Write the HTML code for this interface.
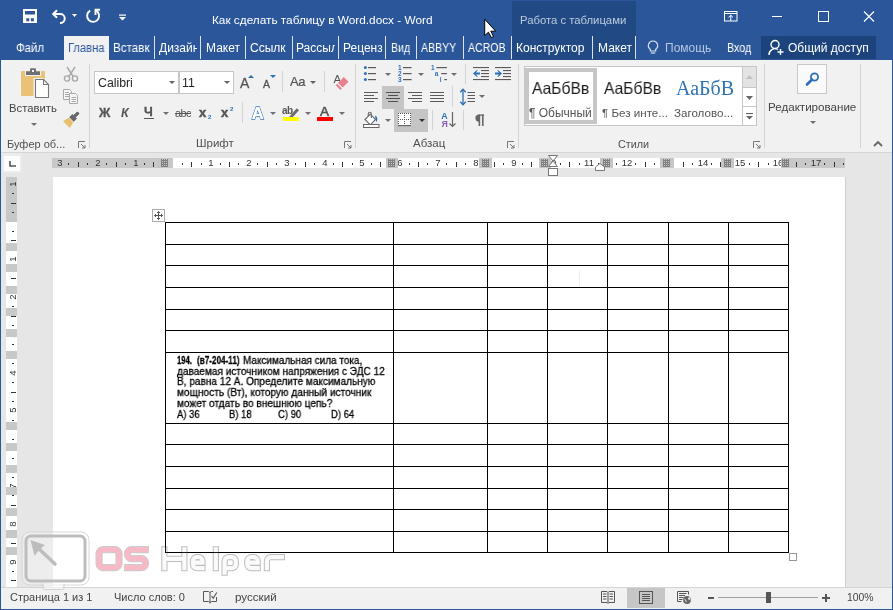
<!DOCTYPE html>
<html><head><meta charset="utf-8">
<style>
*{margin:0;padding:0;box-sizing:border-box}
html,body{width:893px;height:610px;overflow:hidden;background:#e6e6e6;font-family:"Liberation Sans",sans-serif}
.a{position:absolute}
.t{white-space:nowrap;will-change:transform}
svg{overflow:visible}
</style></head><body>
<div class="a" style="left:0px;top:0px;width:893px;height:60px;background:#2b579a;"></div>
<div class="a" style="left:512px;top:1px;width:124px;height:59px;background:#214a85;"></div>
<svg class="a" style="left:23px;top:9px;" width="14" height="14" viewBox="0 0 14 14"><path d="M0 0H14V14H0Z M2 2V5.6H12V2Z M3.3 9.3V12.3H6.3V9.3Z M7.9 9.3V12.3H10.9V9.3Z" fill="#fff" fill-rule="evenodd"/></svg>
<svg class="a" style="left:51px;top:8px;" width="16" height="15" viewBox="0 0 16 15"><path d="M2.5 6H9A4.5 4.5 0 0 1 9.5 15H9" fill="none" stroke="#fff" stroke-width="2"/><path d="M6 2.2L2.2 6L6 9.8" fill="none" stroke="#fff" stroke-width="2"/></svg>
<svg class="a" style="left:72.0px;top:14px;" width="5" height="3" viewBox="0 0 5 3"><path d="M0 0H5L2.5 3Z" fill="#fff"/></svg>
<svg class="a" style="left:86px;top:8px;" width="15" height="15" viewBox="0 0 15 15"><path d="M9.6 2.4A6 6 0 1 1 4.2 2.6" fill="none" stroke="#fff" stroke-width="1.9"/><path d="M9.5 7V1.8H14" fill="none" stroke="#fff" stroke-width="1.9"/></svg>
<svg class="a" style="left:119px;top:14px;" width="7" height="7" viewBox="0 0 7 7"><rect x="0" y="0.5" width="7" height="1.2" fill="#fff"/><path d="M0 3H7L3.5 6.5Z" fill="#fff"/></svg>
<div class="a t" style="left:212px;top:14.81px;font-size:11.8px;line-height:11.8px;color:#fff;">Как сделать таблицу в Word.docx - Word</div>
<div class="a t" style="left:520.3px;top:14.63px;font-size:11.3px;line-height:11.3px;color:#bccade;">Работа с таблицами</div>
<svg class="a" style="left:484px;top:18px;" width="14" height="21" viewBox="0 0 14 21"><path d="M0.7 1.2V17.6L4.4 14.2L7.4 19.6L9.6 18.5L6.8 13.2H11.7Z" fill="#fff" stroke="#000" stroke-width="1" stroke-linejoin="miter"/></svg>
<svg class="a" style="left:723px;top:11px;" width="15" height="11" viewBox="0 0 15 11"><rect x="1.5" y="0.5" width="12.5" height="9.5" fill="none" stroke="#fff"/><path d="M1.5 2.5H14" stroke="#fff"/><path d="M7.75 10V4.2M5.5 6.4L7.75 4.2L10 6.4" fill="none" stroke="#fff"/></svg>
<div class="a" style="left:772px;top:16px;width:10px;height:1px;background:#fff;"></div>
<svg class="a" style="left:817px;top:11px;" width="12" height="11" viewBox="0 0 12 11"><rect x="1.5" y="0.5" width="10" height="10" fill="none" stroke="#fff"/></svg>
<svg class="a" style="left:863px;top:11px;" width="12" height="11" viewBox="0 0 12 11"><path d="M1 0.5L11 10.5M11 0.5L1 10.5" stroke="#fff" stroke-width="1.1"/></svg>
<div class="a" style="left:64px;top:36px;width:45px;height:24px;background:#f1f1f1;"></div>
<div class="a t" style="left:16.4px;top:42.44px;font-size:12px;line-height:12px;color:#fff;transform:scaleX(0.95);transform-origin:0 0;">Файл</div>
<div class="a t" style="left:67.5px;top:42.44px;font-size:12px;line-height:12px;color:#2b579a;transform:scaleX(0.93);transform-origin:0 0;">Главна</div>
<div class="a" style="left:113px;top:42.44px;width:39px;height:16px;overflow:hidden"><div class="t" style="font-size:12px;line-height:12px;color:#fff;transform:scaleX(0.97);transform-origin:0 0">Вставк</div></div>
<div class="a" style="left:159px;top:42.44px;width:38px;height:16px;overflow:hidden"><div class="t" style="font-size:12px;line-height:12px;color:#fff;transform:scaleX(1.0);transform-origin:0 0">Дизайн</div></div>
<div class="a" style="left:206px;top:42.44px;width:36px;height:16px;overflow:hidden"><div class="t" style="font-size:12px;line-height:12px;color:#fff;transform:scaleX(1.0);transform-origin:0 0">Макет</div></div>
<div class="a" style="left:250px;top:42.44px;width:39px;height:16px;overflow:hidden"><div class="t" style="font-size:12px;line-height:12px;color:#fff;transform:scaleX(1.0);transform-origin:0 0">Ссылк</div></div>
<div class="a" style="left:296px;top:42.44px;width:39px;height:16px;overflow:hidden"><div class="t" style="font-size:12px;line-height:12px;color:#fff;transform:scaleX(1.0);transform-origin:0 0">Рассыл</div></div>
<div class="a" style="left:343px;top:42.44px;width:39px;height:16px;overflow:hidden"><div class="t" style="font-size:12px;line-height:12px;color:#fff;transform:scaleX(1.0);transform-origin:0 0">Реценз</div></div>
<div class="a" style="left:391px;top:42.44px;width:22px;height:16px;overflow:hidden"><div class="t" style="font-size:12px;line-height:12px;color:#fff;transform:scaleX(0.88);transform-origin:0 0">Вид</div></div>
<div class="a" style="left:421px;top:42.44px;width:39px;height:16px;overflow:hidden"><div class="t" style="font-size:12px;line-height:12px;color:#fff;transform:scaleX(0.88);transform-origin:0 0">ABBYY</div></div>
<div class="a" style="left:468px;top:42.44px;width:40px;height:16px;overflow:hidden"><div class="t" style="font-size:12px;line-height:12px;color:#fff;transform:scaleX(0.88);transform-origin:0 0">ACROB</div></div>
<div class="a" style="left:516px;top:42.44px;width:73px;height:16px;overflow:hidden"><div class="t" style="font-size:12px;line-height:12px;color:#fff;transform:scaleX(1.0);transform-origin:0 0">Конструктор</div></div>
<div class="a" style="left:598px;top:42.44px;width:34px;height:16px;overflow:hidden"><div class="t" style="font-size:12px;line-height:12px;color:#fff;transform:scaleX(1.0);transform-origin:0 0">Макет</div></div>
<div class="a" style="left:154px;top:36px;width:1px;height:23px;background:#dce3ee;"></div>
<div class="a" style="left:200px;top:36px;width:1px;height:23px;background:#dce3ee;"></div>
<div class="a" style="left:245px;top:36px;width:1px;height:23px;background:#dce3ee;"></div>
<div class="a" style="left:292px;top:36px;width:1px;height:23px;background:#dce3ee;"></div>
<div class="a" style="left:338px;top:36px;width:1px;height:23px;background:#dce3ee;"></div>
<div class="a" style="left:385px;top:36px;width:1px;height:23px;background:#dce3ee;"></div>
<div class="a" style="left:416px;top:36px;width:1px;height:23px;background:#dce3ee;"></div>
<div class="a" style="left:463px;top:36px;width:1px;height:23px;background:#dce3ee;"></div>
<div class="a" style="left:511px;top:36px;width:1px;height:23px;background:#dce3ee;"></div>
<div class="a" style="left:592px;top:36px;width:1px;height:23px;background:#dce3ee;"></div>
<div class="a" style="left:635px;top:36px;width:1px;height:23px;background:#dce3ee;"></div>
<svg class="a" style="left:647px;top:40px;" width="12" height="15" viewBox="0 0 12 15"><path d="M6 1A4.5 4.5 0 0 0 3.3 9.2V11H8.7V9.2A4.5 4.5 0 0 0 6 1Z" fill="none" stroke="#d8e2f0" stroke-width="1.2"/><path d="M3.8 13H8.2" stroke="#d8e2f0" stroke-width="1.2"/></svg>
<div class="a t" style="left:665px;top:42.44px;width:46px;overflow:hidden;font-size:12px;line-height:12px;color:#b4c6e2">Помощь</div>
<div class="a t" style="left:726.6px;top:42.44px;font-size:12px;line-height:12px;color:#fff;transform:scaleX(0.89);transform-origin:0 0;">Вход</div>
<div class="a" style="left:761px;top:36px;width:115px;height:23px;background:#1c437b;"></div>
<svg class="a" style="left:768px;top:39px;" width="17" height="17" viewBox="0 0 17 17"><circle cx="7" cy="5.5" r="4" fill="none" stroke="#fff" stroke-width="1.4"/><path d="M1 16A6 6 0 0 1 10 10.5" fill="none" stroke="#fff" stroke-width="1.4"/><path d="M12.5 10V16M9.5 13H15.5" stroke="#fff" stroke-width="1.4"/></svg>
<div class="a t" style="left:787.6px;top:42.44px;font-size:12px;line-height:12px;color:#fff;">Общий доступ</div>
<div class="a" style="left:1px;top:60px;width:891px;height:92px;background:#f1f1f1;"></div>
<div class="a" style="left:1px;top:152px;width:891px;height:1px;background:#d6d6d6;"></div>
<div class="a" style="left:89px;top:64px;width:1px;height:84px;background:#d4d4d4;"></div>
<div class="a" style="left:355px;top:64px;width:1px;height:84px;background:#d4d4d4;"></div>
<div class="a" style="left:518px;top:64px;width:1px;height:84px;background:#d4d4d4;"></div>
<div class="a" style="left:764px;top:64px;width:1px;height:84px;background:#d4d4d4;"></div>
<div class="a" style="left:860px;top:64px;width:1px;height:84px;background:#d4d4d4;"></div>
<div class="a t" style="left:7px;top:138.69px;font-size:11px;line-height:11px;color:#505050;">Буфер об...</div>
<div class="a t" style="left:195.5px;top:138.27px;font-size:11.5px;line-height:11.5px;color:#505050;">Шрифт</div>
<div class="a t" style="left:413px;top:138.27px;font-size:11.5px;line-height:11.5px;color:#505050;">Абзац</div>
<div class="a t" style="left:617.8px;top:138.86px;font-size:10.8px;line-height:10.8px;color:#505050;">Стили</div>
<svg class="a" style="left:78px;top:141px;" width="8" height="8" viewBox="0 0 8 8"><path d="M0.5 7V0.5H7" fill="none" stroke="#777"/><path d="M3 3L7 7M7 4V7H4" fill="none" stroke="#777"/></svg>
<svg class="a" style="left:344px;top:141px;" width="8" height="8" viewBox="0 0 8 8"><path d="M0.5 7V0.5H7" fill="none" stroke="#777"/><path d="M3 3L7 7M7 4V7H4" fill="none" stroke="#777"/></svg>
<svg class="a" style="left:507px;top:141px;" width="8" height="8" viewBox="0 0 8 8"><path d="M0.5 7V0.5H7" fill="none" stroke="#777"/><path d="M3 3L7 7M7 4V7H4" fill="none" stroke="#777"/></svg>
<svg class="a" style="left:753px;top:141px;" width="8" height="8" viewBox="0 0 8 8"><path d="M0.5 7V0.5H7" fill="none" stroke="#777"/><path d="M3 3L7 7M7 4V7H4" fill="none" stroke="#777"/></svg>
<svg class="a" style="left:20px;top:67px;" width="31" height="32" viewBox="0 0 31 32"><rect x="1" y="4" width="24" height="25" rx="1" fill="#e9c277"/><rect x="5" y="3" width="16" height="6" fill="#f1f1f1"/><path d="M6 4.2H10V2.5A1.2 1.2 0 0 1 11.2 1.2H14.8A1.2 1.2 0 0 1 16 2.5V4.2H20V8H6Z M12 3V5H14V3Z" fill="#707070" fill-rule="evenodd"/><path d="M13.5 11H23L29.5 17.5V31.5H13.5Z" fill="#f1f1f1"/><path d="M15.5 12.5H23.5L28.5 17.5V30.5H15.5Z" fill="#fff" stroke="#777" stroke-width="1.1"/><path d="M23.5 12.5V17.5H28.5" fill="none" stroke="#777" stroke-width="1.1"/></svg>
<div class="a t" style="left:9px;top:103.33px;font-size:11.3px;line-height:11.3px;color:#444;">Вставить</div>
<svg class="a" style="left:30.5px;top:123px;" width="6" height="3" viewBox="0 0 6 3"><path d="M0 0H6L3.0 3Z" fill="#707070"/></svg>
<svg class="a" style="left:63px;top:66px;" width="16" height="16" viewBox="0 0 16 16"><path d="M4 1L10.5 11M12 1L5.5 11" stroke="#a8a8a8" stroke-width="1.4"/><circle cx="4" cy="12.5" r="2.6" fill="none" stroke="#a8a8a8" stroke-width="1.4"/><circle cx="12" cy="12.5" r="2.6" fill="none" stroke="#a8a8a8" stroke-width="1.4"/></svg>
<svg class="a" style="left:63px;top:89px;" width="16" height="15" viewBox="0 0 16 15"><path d="M0.5 0.5H6.5L8.5 2.5V10.5H0.5Z" fill="#f6f6f6" stroke="#a8a8a8"/><path d="M6.5 4.5H12.5L14.5 6.5V14.5H6.5Z" fill="#f6f6f6" stroke="#a8a8a8"/><path d="M2 3.5H6M2 5.5H6M2 7.5H6M8.5 8.5H13M8.5 10.5H13M8.5 12.5H13" stroke="#a8a8a8"/></svg>
<svg class="a" style="left:61px;top:110px;" width="20" height="20" viewBox="0 0 20 20"><g transform="translate(10.5 9.5) rotate(45)"><rect x="-1.6" y="-10" width="3.2" height="6" rx="1" fill="#666"/><rect x="-3.2" y="-4.5" width="6.4" height="4.5" fill="#666"/><path d="M-3.2 0.6H3.2L4.8 7.2H-4.8Z" fill="#e8c06f"/></g></svg>
<div class="a" style="left:94px;top:71px;width:85px;height:23px;background:#fff;border:1px solid #c6c6c6"></div>
<div class="a" style="left:179px;top:71px;width:55px;height:23px;background:#fff;border:1px solid #c6c6c6"></div>
<div class="a t" style="left:97.5px;top:76.59px;font-size:12.3px;line-height:12.3px;color:#262626;">Calibri</div>
<div class="a t" style="left:182px;top:76.59px;font-size:12.3px;line-height:12.3px;color:#262626;">11</div>
<svg class="a" style="left:168.5px;top:81px;" width="6" height="3" viewBox="0 0 6 3"><path d="M0 0H6L3.0 3Z" fill="#606060"/></svg>
<svg class="a" style="left:223.5px;top:81px;" width="6" height="3" viewBox="0 0 6 3"><path d="M0 0H6L3.0 3Z" fill="#606060"/></svg>
<div class="a t" style="left:98.5px;top:106.92px;font-size:12.5px;line-height:12.5px;color:#555;font-weight:bold;-webkit-text-stroke:0.3px #555;">Ж</div>
<div class="a t" style="left:121px;top:106.92px;font-size:12.5px;line-height:12.5px;color:#555;font-style:italic;font-weight:bold;">К</div>
<div class="a t" style="left:144px;top:106.42px;font-size:12.5px;line-height:12.5px;color:#555;font-weight:bold;-webkit-text-stroke:0.3px #555;">Ч</div>
<div class="a" style="left:144px;top:118px;width:10px;height:1.4px;background:#555;"></div>
<svg class="a" style="left:162.5px;top:112px;" width="6" height="3" viewBox="0 0 6 3"><path d="M0 0H6L3.0 3Z" fill="#707070"/></svg>
<div class="a t" style="left:174.5px;top:107.69px;font-size:11px;line-height:11px;color:#555;letter-spacing:-0.6px;">abc</div>
<div class="a" style="left:175px;top:112.5px;width:16px;height:1px;background:#555;"></div>
<div class="a t" style="left:198.5px;top:106.20px;font-size:13px;line-height:13px;color:#555;font-weight:bold;-webkit-text-stroke:0.5px #555;">x</div>
<div class="a t" style="left:207.6px;top:113.82px;font-size:6px;line-height:6px;color:#2e6fb5;font-weight:bold;">2</div>
<div class="a t" style="left:221px;top:106.20px;font-size:13px;line-height:13px;color:#555;font-weight:bold;-webkit-text-stroke:0.5px #555;">x</div>
<div class="a t" style="left:229.6px;top:105.82px;font-size:6px;line-height:6px;color:#2e6fb5;font-weight:bold;">2</div>
<div class="a t" style="left:240px;top:76.15px;font-size:14px;line-height:14px;color:#555;-webkit-text-stroke:0.3px #555;">A</div>
<svg class="a" style="left:248px;top:75px;" width="6" height="3" viewBox="0 0 6 3"><path d="M0 3H6L3 0Z" fill="#2e6fb5"/></svg>
<div class="a t" style="left:263px;top:79.11px;font-size:10.5px;line-height:10.5px;color:#555;-webkit-text-stroke:0.3px #555;">A</div>
<svg class="a" style="left:270px;top:75px;" width="6" height="3" viewBox="0 0 6 3"><path d="M0 0H6L3 3Z" fill="#2e6fb5"/></svg>
<div class="a" style="left:282px;top:71px;width:1px;height:21px;background:#d4d4d4;"></div>
<div class="a t" style="left:289.5px;top:74.80px;font-size:13px;line-height:13px;color:#555;letter-spacing:-0.5px;-webkit-text-stroke:0.2px #555;">Aa</div>
<svg class="a" style="left:309.5px;top:81px;" width="6" height="3" viewBox="0 0 6 3"><path d="M0 0H6L3.0 3Z" fill="#606060"/></svg>
<div class="a" style="left:324px;top:71px;width:1px;height:21px;background:#d4d4d4;"></div>
<svg class="a" style="left:333px;top:74px;" width="17" height="18" viewBox="0 0 17 18"><text x="0.5" y="9" font-family="Liberation Sans" font-size="11.5" fill="#555">A</text><path d="M15.5 7.8L10.8 3.1L5 8.9L9.7 13.6Z" fill="#e8808f"/><path d="M4.2 9.8L8.9 14.5L7.4 16L2.7 11.3Z" fill="#e8808f"/></svg>
<div class="a" style="left:242px;top:102px;width:1px;height:21px;background:#d4d4d4;"></div>
<svg class="a" style="left:251px;top:106px;" width="15" height="14" viewBox="0 0 15 14"><text x="0.8" y="12.6" font-family="Liberation Sans" font-size="16.5" font-weight="bold" fill="#fff" stroke="#3b78c0" stroke-width="1.5" paint-order="stroke" style="paint-order:stroke">A</text><text x="0.8" y="12.6" font-family="Liberation Sans" font-size="16.5" font-weight="bold" fill="#fff">A</text></svg>
<svg class="a" style="left:269.5px;top:112px;" width="6" height="3" viewBox="0 0 6 3"><path d="M0 0H6L3.0 3Z" fill="#707070"/></svg>
<svg class="a" style="left:282px;top:105px;" width="18" height="16" viewBox="0 0 18 16"><text x="0" y="9" font-family="Liberation Sans" font-size="10" font-weight="bold" fill="#555" letter-spacing="-0.5">ab</text><path d="M7.5 11.5L14.8 3.2L17 5.2L9.7 13.3L7 13.6Z" fill="#6a6a6a"/></svg>
<div class="a" style="left:283px;top:117px;width:16px;height:4px;background:#ffff00;"></div>
<svg class="a" style="left:304.5px;top:112px;" width="6" height="3" viewBox="0 0 6 3"><path d="M0 0H6L3.0 3Z" fill="#707070"/></svg>
<div class="a t" style="left:319.8px;top:105.37px;font-size:13.5px;line-height:13.5px;color:#555;-webkit-text-stroke:0.6px #555;">A</div>
<div class="a" style="left:317px;top:117px;width:16px;height:4px;background:#ff0000;"></div>
<svg class="a" style="left:338.5px;top:112px;" width="6" height="3" viewBox="0 0 6 3"><path d="M0 0H6L3.0 3Z" fill="#707070"/></svg>
<svg class="a" style="left:363px;top:66px;" width="14" height="15" viewBox="0 0 14 15"><circle cx="2.4" cy="1.5" r="1.5" fill="#2e6fb5"/><rect x="5" y="1" width="8" height="1.2" fill="#5a5a5a"/><circle cx="2.4" cy="7.5" r="1.5" fill="#2e6fb5"/><rect x="5" y="7" width="8" height="1.2" fill="#5a5a5a"/><circle cx="2.4" cy="13.5" r="1.5" fill="#2e6fb5"/><rect x="5" y="13" width="8" height="1.2" fill="#5a5a5a"/></svg>
<svg class="a" style="left:384.5px;top:72.5px;" width="6" height="3" viewBox="0 0 6 3"><path d="M0 0H6L3.0 3Z" fill="#707070"/></svg>
<svg class="a" style="left:398px;top:66px;" width="14" height="15" viewBox="0 0 14 15"><text x="0" y="4" font-family="Liberation Sans" font-size="6.5" font-weight="bold" fill="#2e6fb5">1</text><rect x="5" y="1" width="8.6" height="1.2" fill="#5a5a5a"/><text x="0" y="10" font-family="Liberation Sans" font-size="6.5" font-weight="bold" fill="#2e6fb5">2</text><rect x="5" y="7" width="8.6" height="1.2" fill="#5a5a5a"/><text x="0" y="16" font-family="Liberation Sans" font-size="6.5" font-weight="bold" fill="#2e6fb5">3</text><rect x="5" y="13" width="8.6" height="1.2" fill="#5a5a5a"/></svg>
<svg class="a" style="left:418.0px;top:72.5px;" width="6" height="3" viewBox="0 0 6 3"><path d="M0 0H6L3.0 3Z" fill="#707070"/></svg>
<svg class="a" style="left:431px;top:66px;" width="17" height="16" viewBox="0 0 17 16"><text x="0" y="4" font-family="Liberation Sans" font-size="6.5" font-weight="bold" fill="#2e6fb5">1</text><rect x="5.3" y="1" width="10.6" height="1.2" fill="#5a5a5a"/><text x="3.8" y="10" font-family="Liberation Sans" font-size="6.5" font-weight="bold" fill="#2e6fb5">a</text><rect x="10.2" y="7" width="5.7" height="1.2" fill="#5a5a5a"/><text x="8.8" y="16" font-family="Liberation Sans" font-size="6.5" font-weight="bold" fill="#2e6fb5">i</text><rect x="13.3" y="13" width="2.6" height="1.2" fill="#5a5a5a"/></svg>
<svg class="a" style="left:450.5px;top:72.5px;" width="6" height="3" viewBox="0 0 6 3"><path d="M0 0H6L3.0 3Z" fill="#707070"/></svg>
<div class="a" style="left:465px;top:64px;width:1px;height:20px;background:#d4d4d4;"></div>
<svg class="a" style="left:473px;top:66px;" width="16" height="15" viewBox="0 0 16 15"><rect x="0" y="1" width="16" height="1.1" fill="#5a5a5a"/><rect x="0" y="13" width="16" height="1.1" fill="#5a5a5a"/><rect x="8" y="4" width="8" height="1.1" fill="#5a5a5a"/><rect x="8" y="7" width="8" height="1.1" fill="#5a5a5a"/><rect x="8" y="10" width="8" height="1.1" fill="#5a5a5a"/><path d="M0 7.5L3.6 4.2H4.8L3 6.6H7V8.4H3L4.8 10.8H3.6Z" fill="#2e6fb5"/></svg>
<svg class="a" style="left:495px;top:66px;" width="16" height="15" viewBox="0 0 16 15"><rect x="0" y="1" width="16" height="1.1" fill="#5a5a5a"/><rect x="0" y="13" width="16" height="1.1" fill="#5a5a5a"/><rect x="8" y="4" width="8" height="1.1" fill="#5a5a5a"/><rect x="8" y="7" width="8" height="1.1" fill="#5a5a5a"/><rect x="8" y="10" width="8" height="1.1" fill="#5a5a5a"/><path d="M7 7.5L3.4 4.2H2.2L4 6.6H0V8.4H4L2.2 10.8H3.4Z" fill="#2e6fb5"/></svg>
<div class="a" style="left:382px;top:86px;width:22px;height:23px;background:#c5c5c5;"></div>
<svg class="a" style="left:364px;top:92px;" width="14" height="11" viewBox="0 0 14 11"><rect x="0" y="0" width="14" height="1" fill="#5a5a5a"/><rect x="0" y="3" width="10" height="1" fill="#5a5a5a"/><rect x="0" y="6" width="14" height="1" fill="#5a5a5a"/><rect x="0" y="9" width="10" height="1" fill="#5a5a5a"/></svg>
<svg class="a" style="left:386px;top:92px;" width="14" height="11" viewBox="0 0 14 11"><rect x="0.0" y="0" width="14" height="1" fill="#505050"/><rect x="2.0" y="3" width="10" height="1" fill="#505050"/><rect x="0.0" y="6" width="14" height="1" fill="#505050"/><rect x="2.0" y="9" width="10" height="1" fill="#505050"/></svg>
<svg class="a" style="left:408px;top:92px;" width="14" height="11" viewBox="0 0 14 11"><rect x="0" y="0" width="14" height="1" fill="#5a5a5a"/><rect x="4" y="3" width="10" height="1" fill="#5a5a5a"/><rect x="0" y="6" width="14" height="1" fill="#5a5a5a"/><rect x="4" y="9" width="10" height="1" fill="#5a5a5a"/></svg>
<svg class="a" style="left:430px;top:92px;" width="14" height="11" viewBox="0 0 14 11"><rect x="0" y="0" width="14" height="1" fill="#5a5a5a"/><rect x="0" y="3" width="14" height="1" fill="#5a5a5a"/><rect x="0" y="6" width="14" height="1" fill="#5a5a5a"/><rect x="0" y="9" width="14" height="1" fill="#5a5a5a"/></svg>
<div class="a" style="left:452px;top:86px;width:1px;height:21px;background:#d4d4d4;"></div>
<svg class="a" style="left:460px;top:88px;" width="16" height="18" viewBox="0 0 16 18"><path d="M3 1.5V16.5" stroke="#2e6fb5" stroke-width="1.3"/><path d="M0.3 4.3L3 1.3L5.7 4.3M0.3 13.7L3 16.7L5.7 13.7" fill="none" stroke="#2e6fb5" stroke-width="1.3"/><rect x="7.5" y="4" width="7.5" height="1" fill="#5a5a5a"/><rect x="7.5" y="7" width="7.5" height="1" fill="#5a5a5a"/><rect x="7.5" y="10" width="7.5" height="1" fill="#5a5a5a"/><rect x="7.5" y="13" width="7.5" height="1" fill="#5a5a5a"/></svg>
<svg class="a" style="left:479.0px;top:95px;" width="6" height="3" viewBox="0 0 6 3"><path d="M0 0H6L3.0 3Z" fill="#707070"/></svg>
<svg class="a" style="left:363px;top:111px;" width="17" height="17" viewBox="0 0 17 17"><path d="M2 8.5L7.3 3.2L12.6 8.5L7.3 13.8Z" fill="#fff" stroke="#666" stroke-width="1.1"/><path d="M5.3 5V2.8A1.4 1.4 0 0 1 8.3 2.8V7" fill="none" stroke="#666" stroke-width="1.1"/><path d="M12 4.6C14.5 5.6 15 8 13.5 11.5L12.7 8.5Z" fill="#2e6fb5"/><rect x="0.5" y="13.5" width="15.5" height="3" fill="#fff" stroke="#666"/></svg>
<svg class="a" style="left:384.5px;top:119px;" width="6" height="3" viewBox="0 0 6 3"><path d="M0 0H6L3.0 3Z" fill="#707070"/></svg>
<div class="a" style="left:394px;top:109px;width:34px;height:23px;background:#c5c5c5;"></div>
<svg class="a" style="left:398px;top:113px;" width="13" height="14" viewBox="0 0 13 14"><rect x="0" y="0" width="13" height="13" fill="#fff"/><rect x="0" y="0" width="1" height="1" fill="#555"/><rect x="2" y="0" width="1" height="1" fill="#555"/><rect x="4" y="0" width="1" height="1" fill="#555"/><rect x="6" y="0" width="1" height="1" fill="#555"/><rect x="8" y="0" width="1" height="1" fill="#555"/><rect x="10" y="0" width="1" height="1" fill="#555"/><rect x="12" y="0" width="1" height="1" fill="#555"/><rect x="0" y="6" width="1" height="1" fill="#555"/><rect x="2" y="6" width="1" height="1" fill="#555"/><rect x="4" y="6" width="1" height="1" fill="#555"/><rect x="6" y="6" width="1" height="1" fill="#555"/><rect x="8" y="6" width="1" height="1" fill="#555"/><rect x="10" y="6" width="1" height="1" fill="#555"/><rect x="12" y="6" width="1" height="1" fill="#555"/><rect x="0" y="0" width="1" height="1" fill="#555"/><rect x="0" y="2" width="1" height="1" fill="#555"/><rect x="0" y="4" width="1" height="1" fill="#555"/><rect x="0" y="6" width="1" height="1" fill="#555"/><rect x="0" y="8" width="1" height="1" fill="#555"/><rect x="0" y="10" width="1" height="1" fill="#555"/><rect x="6" y="0" width="1" height="1" fill="#555"/><rect x="6" y="2" width="1" height="1" fill="#555"/><rect x="6" y="4" width="1" height="1" fill="#555"/><rect x="6" y="6" width="1" height="1" fill="#555"/><rect x="6" y="8" width="1" height="1" fill="#555"/><rect x="6" y="10" width="1" height="1" fill="#555"/><rect x="12" y="0" width="1" height="1" fill="#555"/><rect x="12" y="2" width="1" height="1" fill="#555"/><rect x="12" y="4" width="1" height="1" fill="#555"/><rect x="12" y="6" width="1" height="1" fill="#555"/><rect x="12" y="8" width="1" height="1" fill="#555"/><rect x="12" y="10" width="1" height="1" fill="#555"/><rect x="0" y="12" width="13" height="1.2" fill="#666"/></svg>
<svg class="a" style="left:418.5px;top:119px;" width="6" height="3" viewBox="0 0 6 3"><path d="M0 0H6L3.0 3Z" fill="#333"/></svg>
<div class="a" style="left:432px;top:110px;width:1px;height:20px;background:#d4d4d4;"></div>
<svg class="a" style="left:441px;top:111px;" width="15" height="17" viewBox="0 0 15 17"><text x="0.3" y="7.5" font-family="Liberation Sans" font-size="8.8" font-weight="bold" fill="#2e6fb5">A</text><text x="0.5" y="15.8" font-family="Liberation Sans" font-size="8.8" font-weight="bold" fill="#8b5fb5">Я</text><path d="M11.5 1V15.5M8.5 12.5L11.5 15.5L14.5 12.5" fill="none" stroke="#666" stroke-width="1.2"/></svg>
<div class="a" style="left:463px;top:110px;width:1px;height:20px;background:#d4d4d4;"></div>
<svg class="a" style="left:474px;top:114px;" width="10" height="12" viewBox="0 0 10 12"><path d="M5 0.5H10V1.8H5Z M5 0.5A3.6 3.6 0 0 0 5 7.7Z" fill="#666"/><rect x="4.6" y="0.5" width="1.6" height="11.5" fill="#666"/><rect x="8" y="0.5" width="1.6" height="11.5" fill="#666"/></svg>
<div class="a" style="left:524px;top:66px;width:219px;height:60px;background:#fff;border:1px solid #c6c6c6"></div>
<div class="a" style="left:525px;top:68px;width:72px;height:56px;background:#c6c6c6;"></div>
<div class="a" style="left:529px;top:72px;width:64px;height:48px;background:#fff;"></div>
<div class="a t" style="left:531.8px;top:79.83px;font-size:16.5px;line-height:16.5px;color:#1a1a1a;transform:scaleX(0.945);transform-origin:0 0;">АаБбВв</div>
<div class="a t" style="left:529.3px;top:107.14px;font-size:12px;line-height:12px;color:#555;">¶ Обычный</div>
<div class="a t" style="left:603.5px;top:79.83px;font-size:16.5px;line-height:16.5px;color:#1a1a1a;transform:scaleX(0.945);transform-origin:0 0;">АаБбВв</div>
<div class="a t" style="left:601.5px;top:107.48px;font-size:11.6px;line-height:11.6px;color:#555;">¶ Без инте...</div>
<div class="a t" style="left:675.5px;top:78.07px;font-size:20px;line-height:20px;color:#2e74b5; font-family:'Liberation Serif',serif;">АаБбВ</div>
<div class="a t" style="left:674px;top:107.48px;font-size:11.6px;line-height:11.6px;color:#555;">Заголово...</div>
<div class="a" style="left:742px;top:66px;width:15px;height:60px;background:#fff;border:1px solid #c6c6c6"></div>
<div class="a" style="left:743px;top:67px;width:13px;height:20px;background:#e3e3e3;"></div>
<div class="a" style="left:743px;top:87px;width:13px;height:1px;background:#c6c6c6;"></div>
<div class="a" style="left:743px;top:106px;width:13px;height:1px;background:#c6c6c6;"></div>
<svg class="a" style="left:746px;top:75px;" width="7" height="4" viewBox="0 0 7 4"><path d="M0 4H7L3.5 0Z" fill="#c0c0c0"/></svg>
<svg class="a" style="left:746.0px;top:95.5px;" width="7" height="4" viewBox="0 0 7 4"><path d="M0 0H7L3.5 4Z" fill="#666"/></svg>
<svg class="a" style="left:746px;top:113px;" width="7" height="7" viewBox="0 0 7 7"><rect x="0" y="0" width="7" height="1.1" fill="#666"/><path d="M0 3H7L3.5 6.5Z" fill="#666"/></svg>
<div class="a" style="left:797px;top:64px;width:30px;height:30px;background:#fafafa;border:1px solid #c8c8c8"></div>
<svg class="a" style="left:805px;top:72px;" width="15" height="14" viewBox="0 0 15 14"><circle cx="9.5" cy="5" r="3.6" fill="none" stroke="#2e6fb5" stroke-width="1.8"/><path d="M7 7.5L2 12.5" stroke="#2e6fb5" stroke-width="2.6" stroke-linecap="round"/></svg>
<div class="a t" style="left:768px;top:101.08px;font-size:11.6px;line-height:11.6px;color:#444;">Редактирование</div>
<svg class="a" style="left:809.5px;top:121px;" width="6" height="3" viewBox="0 0 6 3"><path d="M0 0H6L3.0 3Z" fill="#707070"/></svg>
<svg class="a" style="left:873px;top:140px;" width="10" height="7" viewBox="0 0 10 7"><path d="M1 6L5 2L9 6" fill="none" stroke="#666" stroke-width="1.8"/></svg>
<div class="a" style="left:1px;top:153px;width:891px;height:434px;background:#e6e6e6;"></div>
<div class="a" style="left:53px;top:177px;width:792px;height:410px;background:#fff;"></div>
<div class="a" style="left:845px;top:177px;width:1px;height:410px;background:#d0d0d0;"></div>
<div class="a" style="left:2px;top:153px;width:20px;height:20px;background:#ececec;"></div>
<div class="a" style="left:4px;top:156px;width:16px;height:15px;background:#fdfdfd;"></div>
<svg class="a" style="left:9px;top:161px;" width="7" height="6" viewBox="0 0 7 6"><path d="M1 0V5H7" fill="none" stroke="#555" stroke-width="1.6"/></svg>
<div class="a" style="left:52px;top:158px;width:793px;height:10px;background:#c8c8c8;"></div>
<div class="a" style="left:173px;top:158px;width:608px;height:10px;background:#fff;"></div>
<div class="a t" style="left:49.9px;top:158px;font-size:9.5px;line-height:10px;color:#333;width:20px;text-align:center">3</div><div class="a" style="left:68px;top:163px;width:1px;height:2px;background:#333"></div><div class="a" style="left:78px;top:162px;width:1px;height:5px;background:#333"></div><div class="a" style="left:87px;top:163px;width:1px;height:2px;background:#333"></div><div class="a t" style="left:87.7px;top:158px;font-size:9.5px;line-height:10px;color:#333;width:20px;text-align:center">2</div><div class="a" style="left:106px;top:163px;width:1px;height:2px;background:#333"></div><div class="a" style="left:116px;top:162px;width:1px;height:5px;background:#333"></div><div class="a" style="left:125px;top:163px;width:1px;height:2px;background:#333"></div><div class="a t" style="left:125.5px;top:158px;font-size:9.5px;line-height:10px;color:#333;width:20px;text-align:center">1</div><div class="a" style="left:144px;top:163px;width:1px;height:2px;background:#333"></div><div class="a" style="left:153px;top:162px;width:1px;height:5px;background:#333"></div><div class="a" style="left:163px;top:163px;width:1px;height:2px;background:#333"></div><div class="a" style="left:182px;top:163px;width:1px;height:2px;background:#333"></div><div class="a" style="left:191px;top:162px;width:1px;height:5px;background:#333"></div><div class="a" style="left:201px;top:163px;width:1px;height:2px;background:#333"></div><div class="a t" style="left:201.1px;top:158px;font-size:9.5px;line-height:10px;color:#333;width:20px;text-align:center">1</div><div class="a" style="left:220px;top:163px;width:1px;height:2px;background:#333"></div><div class="a" style="left:229px;top:162px;width:1px;height:5px;background:#333"></div><div class="a" style="left:238px;top:163px;width:1px;height:2px;background:#333"></div><div class="a t" style="left:238.9px;top:158px;font-size:9.5px;line-height:10px;color:#333;width:20px;text-align:center">2</div><div class="a" style="left:257px;top:163px;width:1px;height:2px;background:#333"></div><div class="a" style="left:267px;top:162px;width:1px;height:5px;background:#333"></div><div class="a" style="left:276px;top:163px;width:1px;height:2px;background:#333"></div><div class="a t" style="left:276.7px;top:158px;font-size:9.5px;line-height:10px;color:#333;width:20px;text-align:center">3</div><div class="a" style="left:295px;top:163px;width:1px;height:2px;background:#333"></div><div class="a" style="left:305px;top:162px;width:1px;height:5px;background:#333"></div><div class="a" style="left:314px;top:163px;width:1px;height:2px;background:#333"></div><div class="a t" style="left:314.5px;top:158px;font-size:9.5px;line-height:10px;color:#333;width:20px;text-align:center">4</div><div class="a" style="left:333px;top:163px;width:1px;height:2px;background:#333"></div><div class="a" style="left:342px;top:162px;width:1px;height:5px;background:#333"></div><div class="a" style="left:352px;top:163px;width:1px;height:2px;background:#333"></div><div class="a t" style="left:352.3px;top:158px;font-size:9.5px;line-height:10px;color:#333;width:20px;text-align:center">5</div><div class="a" style="left:371px;top:163px;width:1px;height:2px;background:#333"></div><div class="a" style="left:380px;top:162px;width:1px;height:5px;background:#333"></div><div class="a" style="left:390px;top:163px;width:1px;height:2px;background:#333"></div><div class="a t" style="left:390.1px;top:158px;font-size:9.5px;line-height:10px;color:#333;width:20px;text-align:center">6</div><div class="a" style="left:409px;top:163px;width:1px;height:2px;background:#333"></div><div class="a" style="left:418px;top:162px;width:1px;height:5px;background:#333"></div><div class="a" style="left:427px;top:163px;width:1px;height:2px;background:#333"></div><div class="a t" style="left:427.9px;top:158px;font-size:9.5px;line-height:10px;color:#333;width:20px;text-align:center">7</div><div class="a" style="left:446px;top:163px;width:1px;height:2px;background:#333"></div><div class="a" style="left:456px;top:162px;width:1px;height:5px;background:#333"></div><div class="a" style="left:465px;top:163px;width:1px;height:2px;background:#333"></div><div class="a t" style="left:465.7px;top:158px;font-size:9.5px;line-height:10px;color:#333;width:20px;text-align:center">8</div><div class="a" style="left:484px;top:163px;width:1px;height:2px;background:#333"></div><div class="a" style="left:494px;top:162px;width:1px;height:5px;background:#333"></div><div class="a" style="left:503px;top:163px;width:1px;height:2px;background:#333"></div><div class="a t" style="left:503.5px;top:158px;font-size:9.5px;line-height:10px;color:#333;width:20px;text-align:center">9</div><div class="a" style="left:522px;top:163px;width:1px;height:2px;background:#333"></div><div class="a" style="left:531px;top:162px;width:1px;height:5px;background:#333"></div><div class="a" style="left:541px;top:163px;width:1px;height:2px;background:#333"></div><div class="a t" style="left:541.3px;top:158px;font-size:9.5px;line-height:10px;color:#333;width:20px;text-align:center">10</div><div class="a" style="left:560px;top:163px;width:1px;height:2px;background:#333"></div><div class="a" style="left:569px;top:162px;width:1px;height:5px;background:#333"></div><div class="a" style="left:579px;top:163px;width:1px;height:2px;background:#333"></div><div class="a t" style="left:579.1px;top:158px;font-size:9.5px;line-height:10px;color:#333;width:20px;text-align:center">11</div><div class="a" style="left:598px;top:163px;width:1px;height:2px;background:#333"></div><div class="a" style="left:607px;top:162px;width:1px;height:5px;background:#333"></div><div class="a" style="left:616px;top:163px;width:1px;height:2px;background:#333"></div><div class="a t" style="left:616.9px;top:158px;font-size:9.5px;line-height:10px;color:#333;width:20px;text-align:center">12</div><div class="a" style="left:635px;top:163px;width:1px;height:2px;background:#333"></div><div class="a" style="left:645px;top:162px;width:1px;height:5px;background:#333"></div><div class="a" style="left:654px;top:163px;width:1px;height:2px;background:#333"></div><div class="a t" style="left:654.7px;top:158px;font-size:9.5px;line-height:10px;color:#333;width:20px;text-align:center">13</div><div class="a" style="left:673px;top:163px;width:1px;height:2px;background:#333"></div><div class="a" style="left:683px;top:162px;width:1px;height:5px;background:#333"></div><div class="a" style="left:692px;top:163px;width:1px;height:2px;background:#333"></div><div class="a t" style="left:692.5px;top:158px;font-size:9.5px;line-height:10px;color:#333;width:20px;text-align:center">14</div><div class="a" style="left:711px;top:163px;width:1px;height:2px;background:#333"></div><div class="a" style="left:720px;top:162px;width:1px;height:5px;background:#333"></div><div class="a" style="left:730px;top:163px;width:1px;height:2px;background:#333"></div><div class="a t" style="left:730.3px;top:158px;font-size:9.5px;line-height:10px;color:#333;width:20px;text-align:center">15</div><div class="a" style="left:749px;top:163px;width:1px;height:2px;background:#333"></div><div class="a" style="left:758px;top:162px;width:1px;height:5px;background:#333"></div><div class="a" style="left:768px;top:163px;width:1px;height:2px;background:#333"></div><div class="a t" style="left:768.1px;top:158px;font-size:9.5px;line-height:10px;color:#333;width:20px;text-align:center">16</div><div class="a" style="left:787px;top:163px;width:1px;height:2px;background:#333"></div><div class="a" style="left:796px;top:162px;width:1px;height:5px;background:#333"></div><div class="a" style="left:805px;top:163px;width:1px;height:2px;background:#333"></div><div class="a t" style="left:805.9px;top:158px;font-size:9.5px;line-height:10px;color:#333;width:20px;text-align:center">17</div><div class="a" style="left:824px;top:163px;width:1px;height:2px;background:#333"></div><div class="a" style="left:834px;top:162px;width:1px;height:5px;background:#333"></div><div class="a" style="left:843px;top:163px;width:1px;height:2px;background:#333"></div>
<div class="a" style="left:158px;top:158px;width:13px;height:10px;background:#c6c6c6;"></div>
<svg class="a" style="left:158px;top:158px;" width="13" height="10" viewBox="0 0 13 10"><rect x="3" y="1" width="1" height="8" fill="#7f7f7f"/><rect x="3" y="2" width="7" height="1" fill="#7f7f7f"/><rect x="5" y="1" width="1" height="8" fill="#7f7f7f"/><rect x="3" y="4" width="7" height="1" fill="#7f7f7f"/><rect x="7" y="1" width="1" height="8" fill="#7f7f7f"/><rect x="3" y="6" width="7" height="1" fill="#7f7f7f"/><rect x="9" y="1" width="1" height="8" fill="#7f7f7f"/><rect x="3" y="8" width="7" height="1" fill="#7f7f7f"/></svg>
<div class="a" style="left:386px;top:158px;width:12px;height:10px;background:#c6c6c6;"></div>
<svg class="a" style="left:386px;top:158px;" width="12" height="10" viewBox="0 0 12 10"><rect x="2" y="1" width="1" height="8" fill="#7f7f7f"/><rect x="2" y="2" width="7" height="1" fill="#7f7f7f"/><rect x="4" y="1" width="1" height="8" fill="#7f7f7f"/><rect x="2" y="4" width="7" height="1" fill="#7f7f7f"/><rect x="6" y="1" width="1" height="8" fill="#7f7f7f"/><rect x="2" y="6" width="7" height="1" fill="#7f7f7f"/><rect x="8" y="1" width="1" height="8" fill="#7f7f7f"/><rect x="2" y="8" width="7" height="1" fill="#7f7f7f"/></svg>
<div class="a" style="left:479px;top:158px;width:13px;height:10px;background:#c6c6c6;"></div>
<svg class="a" style="left:479px;top:158px;" width="13" height="10" viewBox="0 0 13 10"><rect x="3" y="1" width="1" height="8" fill="#7f7f7f"/><rect x="3" y="2" width="7" height="1" fill="#7f7f7f"/><rect x="5" y="1" width="1" height="8" fill="#7f7f7f"/><rect x="3" y="4" width="7" height="1" fill="#7f7f7f"/><rect x="7" y="1" width="1" height="8" fill="#7f7f7f"/><rect x="3" y="6" width="7" height="1" fill="#7f7f7f"/><rect x="9" y="1" width="1" height="8" fill="#7f7f7f"/><rect x="3" y="8" width="7" height="1" fill="#7f7f7f"/></svg>
<div class="a" style="left:539px;top:158px;width:12px;height:10px;background:#c6c6c6;"></div>
<svg class="a" style="left:539px;top:158px;" width="12" height="10" viewBox="0 0 12 10"><rect x="2" y="1" width="1" height="8" fill="#7f7f7f"/><rect x="2" y="2" width="7" height="1" fill="#7f7f7f"/><rect x="4" y="1" width="1" height="8" fill="#7f7f7f"/><rect x="2" y="4" width="7" height="1" fill="#7f7f7f"/><rect x="6" y="1" width="1" height="8" fill="#7f7f7f"/><rect x="2" y="6" width="7" height="1" fill="#7f7f7f"/><rect x="8" y="1" width="1" height="8" fill="#7f7f7f"/><rect x="2" y="8" width="7" height="1" fill="#7f7f7f"/></svg>
<div class="a" style="left:600px;top:158px;width:13px;height:10px;background:#c6c6c6;"></div>
<svg class="a" style="left:600px;top:158px;" width="13" height="10" viewBox="0 0 13 10"><rect x="3" y="1" width="1" height="8" fill="#7f7f7f"/><rect x="3" y="2" width="7" height="1" fill="#7f7f7f"/><rect x="5" y="1" width="1" height="8" fill="#7f7f7f"/><rect x="3" y="4" width="7" height="1" fill="#7f7f7f"/><rect x="7" y="1" width="1" height="8" fill="#7f7f7f"/><rect x="3" y="6" width="7" height="1" fill="#7f7f7f"/><rect x="9" y="1" width="1" height="8" fill="#7f7f7f"/><rect x="3" y="8" width="7" height="1" fill="#7f7f7f"/></svg>
<div class="a" style="left:660px;top:158px;width:14px;height:10px;background:#c6c6c6;"></div>
<svg class="a" style="left:660px;top:158px;" width="14" height="10" viewBox="0 0 14 10"><rect x="3" y="1" width="1" height="8" fill="#7f7f7f"/><rect x="3" y="2" width="7" height="1" fill="#7f7f7f"/><rect x="5" y="1" width="1" height="8" fill="#7f7f7f"/><rect x="3" y="4" width="7" height="1" fill="#7f7f7f"/><rect x="7" y="1" width="1" height="8" fill="#7f7f7f"/><rect x="3" y="6" width="7" height="1" fill="#7f7f7f"/><rect x="9" y="1" width="1" height="8" fill="#7f7f7f"/><rect x="3" y="8" width="7" height="1" fill="#7f7f7f"/></svg>
<div class="a" style="left:721px;top:158px;width:13px;height:10px;background:#c6c6c6;"></div>
<svg class="a" style="left:721px;top:158px;" width="13" height="10" viewBox="0 0 13 10"><rect x="3" y="1" width="1" height="8" fill="#7f7f7f"/><rect x="3" y="2" width="7" height="1" fill="#7f7f7f"/><rect x="5" y="1" width="1" height="8" fill="#7f7f7f"/><rect x="3" y="4" width="7" height="1" fill="#7f7f7f"/><rect x="7" y="1" width="1" height="8" fill="#7f7f7f"/><rect x="3" y="6" width="7" height="1" fill="#7f7f7f"/><rect x="9" y="1" width="1" height="8" fill="#7f7f7f"/><rect x="3" y="8" width="7" height="1" fill="#7f7f7f"/></svg>
<div class="a" style="left:781px;top:158px;width:10px;height:10px;background:#c6c6c6;"></div>
<svg class="a" style="left:781px;top:158px;" width="10" height="10" viewBox="0 0 10 10"><rect x="1" y="1" width="1" height="8" fill="#7f7f7f"/><rect x="1" y="2" width="7" height="1" fill="#7f7f7f"/><rect x="3" y="1" width="1" height="8" fill="#7f7f7f"/><rect x="1" y="4" width="7" height="1" fill="#7f7f7f"/><rect x="5" y="1" width="1" height="8" fill="#7f7f7f"/><rect x="1" y="6" width="7" height="1" fill="#7f7f7f"/><rect x="7" y="1" width="1" height="8" fill="#7f7f7f"/><rect x="1" y="8" width="7" height="1" fill="#7f7f7f"/></svg>
<svg class="a" style="left:548px;top:155px;" width="10" height="22" viewBox="0 0 10 22"><path d="M0.5 0.5H9.5L5 6L9.5 11.5H0.5L5 6Z" fill="#fff" stroke="#777"/><rect x="0.5" y="13.5" width="9" height="7" fill="#fff" stroke="#777"/></svg>
<svg class="a" style="left:595px;top:163px;" width="10" height="8" viewBox="0 0 10 8"><path d="M0.5 7.5V4L5 0.5L9.5 4V7.5Z" fill="#fff" stroke="#777"/></svg>
<div class="a" style="left:6px;top:177px;width:11px;height:410px;background:#c8c8c8;"></div>
<div class="a" style="left:6px;top:222px;width:11px;height:365px;background:#fff;"></div>
<div class="a t" style="left:3px;top:178.6px;width:20px;height:10px;font-size:9.5px;line-height:10px;color:#333;text-align:center;transform:rotate(-90deg)">1</div><div class="a" style="left:12px;top:193px;width:2px;height:1px;background:#333"></div><div class="a" style="left:11px;top:203px;width:5px;height:1px;background:#333"></div><div class="a" style="left:12px;top:212px;width:2px;height:1px;background:#333"></div><div class="a" style="left:12px;top:231px;width:2px;height:1px;background:#333"></div><div class="a" style="left:11px;top:240px;width:5px;height:1px;background:#333"></div><div class="a" style="left:12px;top:250px;width:2px;height:1px;background:#333"></div><div class="a t" style="left:3px;top:254.2px;width:20px;height:10px;font-size:9.5px;line-height:10px;color:#333;text-align:center;transform:rotate(-90deg)">1</div><div class="a" style="left:12px;top:269px;width:2px;height:1px;background:#333"></div><div class="a" style="left:11px;top:278px;width:5px;height:1px;background:#333"></div><div class="a" style="left:12px;top:288px;width:2px;height:1px;background:#333"></div><div class="a t" style="left:3px;top:292.0px;width:20px;height:10px;font-size:9.5px;line-height:10px;color:#333;text-align:center;transform:rotate(-90deg)">2</div><div class="a" style="left:12px;top:306px;width:2px;height:1px;background:#333"></div><div class="a" style="left:11px;top:316px;width:5px;height:1px;background:#333"></div><div class="a" style="left:12px;top:325px;width:2px;height:1px;background:#333"></div><div class="a t" style="left:3px;top:329.8px;width:20px;height:10px;font-size:9.5px;line-height:10px;color:#333;text-align:center;transform:rotate(-90deg)">3</div><div class="a" style="left:12px;top:344px;width:2px;height:1px;background:#333"></div><div class="a" style="left:11px;top:354px;width:5px;height:1px;background:#333"></div><div class="a" style="left:12px;top:363px;width:2px;height:1px;background:#333"></div><div class="a t" style="left:3px;top:367.6px;width:20px;height:10px;font-size:9.5px;line-height:10px;color:#333;text-align:center;transform:rotate(-90deg)">4</div><div class="a" style="left:12px;top:382px;width:2px;height:1px;background:#333"></div><div class="a" style="left:11px;top:392px;width:5px;height:1px;background:#333"></div><div class="a" style="left:12px;top:401px;width:2px;height:1px;background:#333"></div><div class="a t" style="left:3px;top:405.4px;width:20px;height:10px;font-size:9.5px;line-height:10px;color:#333;text-align:center;transform:rotate(-90deg)">5</div><div class="a" style="left:12px;top:420px;width:2px;height:1px;background:#333"></div><div class="a" style="left:11px;top:429px;width:5px;height:1px;background:#333"></div><div class="a" style="left:12px;top:439px;width:2px;height:1px;background:#333"></div><div class="a t" style="left:3px;top:443.2px;width:20px;height:10px;font-size:9.5px;line-height:10px;color:#333;text-align:center;transform:rotate(-90deg)">6</div><div class="a" style="left:12px;top:458px;width:2px;height:1px;background:#333"></div><div class="a" style="left:11px;top:467px;width:5px;height:1px;background:#333"></div><div class="a" style="left:12px;top:477px;width:2px;height:1px;background:#333"></div><div class="a t" style="left:3px;top:481.0px;width:20px;height:10px;font-size:9.5px;line-height:10px;color:#333;text-align:center;transform:rotate(-90deg)">7</div><div class="a" style="left:12px;top:495px;width:2px;height:1px;background:#333"></div><div class="a" style="left:11px;top:505px;width:5px;height:1px;background:#333"></div><div class="a" style="left:12px;top:514px;width:2px;height:1px;background:#333"></div><div class="a t" style="left:3px;top:518.8px;width:20px;height:10px;font-size:9.5px;line-height:10px;color:#333;text-align:center;transform:rotate(-90deg)">8</div><div class="a" style="left:12px;top:533px;width:2px;height:1px;background:#333"></div><div class="a" style="left:11px;top:543px;width:5px;height:1px;background:#333"></div><div class="a" style="left:12px;top:552px;width:2px;height:1px;background:#333"></div><div class="a t" style="left:3px;top:556.6px;width:20px;height:10px;font-size:9.5px;line-height:10px;color:#333;text-align:center;transform:rotate(-90deg)">9</div><div class="a" style="left:12px;top:571px;width:2px;height:1px;background:#333"></div><div class="a" style="left:11px;top:580px;width:5px;height:1px;background:#333"></div>
<div class="a" style="left:6px;top:242.5px;width:11px;height:8px;background:#c8c8c8;"></div>
<div class="a" style="left:6px;top:263.5px;width:11px;height:8px;background:#c8c8c8;"></div>
<div class="a" style="left:6px;top:285.5px;width:11px;height:8px;background:#c8c8c8;"></div>
<div class="a" style="left:6px;top:307.5px;width:11px;height:8px;background:#c8c8c8;"></div>
<div class="a" style="left:6px;top:328.5px;width:11px;height:8px;background:#c8c8c8;"></div>
<div class="a" style="left:6px;top:350.5px;width:11px;height:8px;background:#c8c8c8;"></div>
<div class="a" style="left:6px;top:421.5px;width:11px;height:8px;background:#c8c8c8;"></div>
<div class="a" style="left:6px;top:442.5px;width:11px;height:8px;background:#c8c8c8;"></div>
<div class="a" style="left:6px;top:464.5px;width:11px;height:8px;background:#c8c8c8;"></div>
<div class="a" style="left:6px;top:486.5px;width:11px;height:8px;background:#c8c8c8;"></div>
<div class="a" style="left:6px;top:507.5px;width:11px;height:8px;background:#c8c8c8;"></div>
<div class="a" style="left:6px;top:529.5px;width:11px;height:8px;background:#c8c8c8;"></div>
<div class="a" style="left:6px;top:546.5px;width:11px;height:8px;background:#c8c8c8;"></div>
<div class="a" style="left:165px;top:222px;width:1.3px;height:331.3px;background:#000;"></div>
<div class="a" style="left:393px;top:222px;width:1.3px;height:331.3px;background:#000;"></div>
<div class="a" style="left:487px;top:222px;width:1.3px;height:331.3px;background:#000;"></div>
<div class="a" style="left:547px;top:222px;width:1.3px;height:331.3px;background:#000;"></div>
<div class="a" style="left:607px;top:222px;width:1.3px;height:331.3px;background:#000;"></div>
<div class="a" style="left:668px;top:222px;width:1.3px;height:331.3px;background:#000;"></div>
<div class="a" style="left:728px;top:222px;width:1.3px;height:331.3px;background:#000;"></div>
<div class="a" style="left:788px;top:222px;width:1.3px;height:331.3px;background:#000;"></div>
<div class="a" style="left:165px;top:222px;width:624.3px;height:1.3px;background:#000;"></div>
<div class="a" style="left:165px;top:244px;width:624.3px;height:1.3px;background:#000;"></div>
<div class="a" style="left:165px;top:265px;width:624.3px;height:1.3px;background:#000;"></div>
<div class="a" style="left:165px;top:287px;width:624.3px;height:1.3px;background:#000;"></div>
<div class="a" style="left:165px;top:309px;width:624.3px;height:1.3px;background:#000;"></div>
<div class="a" style="left:165px;top:330px;width:624.3px;height:1.3px;background:#000;"></div>
<div class="a" style="left:165px;top:352px;width:624.3px;height:1.3px;background:#000;"></div>
<div class="a" style="left:165px;top:423px;width:624.3px;height:1.3px;background:#000;"></div>
<div class="a" style="left:165px;top:444px;width:624.3px;height:1.3px;background:#000;"></div>
<div class="a" style="left:165px;top:466px;width:624.3px;height:1.3px;background:#000;"></div>
<div class="a" style="left:165px;top:488px;width:624.3px;height:1.3px;background:#000;"></div>
<div class="a" style="left:165px;top:509px;width:624.3px;height:1.3px;background:#000;"></div>
<div class="a" style="left:165px;top:531px;width:624.3px;height:1.3px;background:#000;"></div>
<div class="a" style="left:165px;top:552px;width:624.3px;height:1.3px;background:#000;"></div>
<svg class="a" style="left:152px;top:209px;" width="13" height="13" viewBox="0 0 13 13"><rect x="0.5" y="0.5" width="12" height="12" fill="#fff" stroke="#aaa"/><path d="M6.5 2.5V10.5M2.5 6.5H10.5" stroke="#555"/><path d="M5 4L6.5 2.5L8 4M5 9L6.5 10.5L8 9M4 5L2.5 6.5L4 8M9 5L10.5 6.5L9 8" fill="none" stroke="#555"/></svg>
<svg class="a" style="left:789px;top:553px;" width="8" height="8" viewBox="0 0 8 8"><rect x="0.5" y="0.5" width="7" height="7" fill="#fff" stroke="#999"/></svg>
<div class="a" style="left:579px;top:270px;width:1px;height:16px;background:#eeeeee;"></div>
<div class="a t" style="left:176.5px;top:356.10px;font-size:10.4px;line-height:10.4px;color:#000;transform:scaleX(0.74);transform-origin:0 0;-webkit-text-stroke:0.3px #000;font-weight:bold;">194.</div>
<div class="a t" style="left:196.9px;top:355.97px;font-size:10.2px;line-height:10.2px;color:#000;transform:scaleX(0.8);transform-origin:0 0;-webkit-text-stroke:0.3px #000;font-weight:bold;">(в7-204-11)</div>
<div class="a t" style="left:243.3px;top:354.89px;font-size:11px;line-height:11px;color:#000;transform:scaleX(0.907);transform-origin:0 0;-webkit-text-stroke:0.3px #000;">Максимальная сила тока,</div>
<div class="a t" style="left:176.7px;top:365.69px;font-size:11px;line-height:11px;color:#000;transform:scaleX(0.916);transform-origin:0 0;-webkit-text-stroke:0.3px #000;">даваемая источником напряжения с ЭДС 12</div>
<div class="a t" style="left:176.7px;top:376.39px;font-size:11px;line-height:11px;color:#000;transform:scaleX(0.915);transform-origin:0 0;-webkit-text-stroke:0.3px #000;">В, равна 12 А. Определите максимальную</div>
<div class="a t" style="left:176.7px;top:387.19px;font-size:11px;line-height:11px;color:#000;transform:scaleX(0.92);transform-origin:0 0;-webkit-text-stroke:0.3px #000;">мощность (Вт), которую данный источник</div>
<div class="a t" style="left:176.7px;top:397.89px;font-size:11px;line-height:11px;color:#000;transform:scaleX(0.92);transform-origin:0 0;-webkit-text-stroke:0.3px #000;">может отдать во внешнюю цепь?</div>
<div class="a t" style="left:176.5px;top:408.69px;font-size:11px;line-height:11px;color:#000;transform:scaleX(0.86);transform-origin:0 0;-webkit-text-stroke:0.3px #000;">A) 36</div>
<div class="a t" style="left:228.5px;top:408.69px;font-size:11px;line-height:11px;color:#000;transform:scaleX(0.86);transform-origin:0 0;-webkit-text-stroke:0.3px #000;">B) 18</div>
<div class="a t" style="left:278.2px;top:408.69px;font-size:11px;line-height:11px;color:#000;transform:scaleX(0.86);transform-origin:0 0;-webkit-text-stroke:0.3px #000;">C) 90</div>
<div class="a t" style="left:330.6px;top:408.69px;font-size:11px;line-height:11px;color:#000;transform:scaleX(0.86);transform-origin:0 0;-webkit-text-stroke:0.3px #000;">D) 64</div>
<svg class="a" style="left:21px;top:531px;" width="69" height="59" viewBox="0 0 69 59"><rect x="1" y="1" width="67" height="53" rx="8" fill="rgba(255,255,255,0.3)" stroke="#d6d6d6" stroke-width="1"/><rect x="5" y="5" width="59" height="45" rx="5" fill="none" stroke="#bdbdbd" stroke-width="3"/><path d="M9.5 9L13.5 25L17.5 19.5L24 14Z" fill="#bdbdbd"/><path d="M16 16L34 33" stroke="#bdbdbd" stroke-width="3.6" stroke-linecap="round"/><path d="M22 54.5V56A2 2 0 0 0 24 58H40A2 2 0 0 0 42 56V54.5" fill="none" stroke="#d6d6d6"/></svg>
<svg class="a" style="left:0;top:0" width="893" height="610" viewBox="0 0 893 610"><g fill="none" stroke-linejoin="round" stroke-linecap="square"><path d="M115 549.6H103.1A4 4 0 0 0 99.1 553.6V563.7A4 4 0 0 0 103.1 567.7H115A4 4 0 0 0 119 563.7V553.6A4 4 0 0 0 115 549.6Z M145.4 549.6H131.5A4 4 0 0 0 127.5 553.6V554.6A4 4 0 0 0 131.5 558.6H141.4A4 4 0 0 1 145.4 562.6V563.7A4 4 0 0 1 141.4 567.7H127.5" stroke="#cdcdcd" stroke-width="7.2"/><path d="M115 549.6H103.1A4 4 0 0 0 99.1 553.6V563.7A4 4 0 0 0 103.1 567.7H115A4 4 0 0 0 119 563.7V553.6A4 4 0 0 0 115 549.6Z M145.4 549.6H131.5A4 4 0 0 0 127.5 553.6V554.6A4 4 0 0 0 131.5 558.6H141.4A4 4 0 0 1 145.4 562.6V563.7A4 4 0 0 1 141.4 567.7H127.5" stroke="#f8b9c6" stroke-width="5.2"/><path d="M164.4 549.4V568.2M184.4 549.4V568.2M164.4 558.8H184.4 M202.5 562.6H192.9V561A4 4 0 0 1 196.9 557H198.5A4 4 0 0 1 202.5 561V562.6M192.9 562.6V564.2A4 4 0 0 0 196.9 568.2H202.5 M215.85 549.4V568.2 M224.6 572.7V561.1A4 4 0 0 1 228.6 557.1H231.8A4 4 0 0 1 235.8 561.1V564.2A4 4 0 0 1 231.8 568.2H224.6 M257.7 562.6H247.3V561A4 4 0 0 1 251.3 557H253.7A4 4 0 0 1 257.7 561V562.6M247.3 562.6V564.2A4 4 0 0 0 251.3 568.2H257.7 M266.9 568.2V561.1A4 4 0 0 1 270.9 557.1H281.9" stroke="#bdbdbd" stroke-width="6.2"/><path d="M164.4 549.4V568.2M184.4 549.4V568.2M164.4 558.8H184.4 M202.5 562.6H192.9V561A4 4 0 0 1 196.9 557H198.5A4 4 0 0 1 202.5 561V562.6M192.9 562.6V564.2A4 4 0 0 0 196.9 568.2H202.5 M215.85 549.4V568.2 M224.6 572.7V561.1A4 4 0 0 1 228.6 557.1H231.8A4 4 0 0 1 235.8 561.1V564.2A4 4 0 0 1 231.8 568.2H224.6 M257.7 562.6H247.3V561A4 4 0 0 1 251.3 557H253.7A4 4 0 0 1 257.7 561V562.6M247.3 562.6V564.2A4 4 0 0 0 251.3 568.2H257.7 M266.9 568.2V561.1A4 4 0 0 1 270.9 557.1H281.9" stroke="#fafafa" stroke-width="4.2"/></g></svg>
<div class="a" style="left:165px;top:545px;width:1.3px;height:8.3px;background:rgba(0,0,0,0.9);"></div>
<div class="a" style="left:165px;top:552px;width:624px;height:1.3px;background:rgba(0,0,0,0.9);"></div>
<div class="a" style="left:1px;top:587px;width:891px;height:22px;background:#f1f1f1;"></div>
<div class="a" style="left:1px;top:587px;width:891px;height:1px;background:#d4d4d4;"></div>
<div class="a t" style="left:9.5px;top:591.69px;font-size:11px;line-height:11px;color:#444;">Страница 1 из 1</div>
<div class="a t" style="left:113.5px;top:591.69px;font-size:11px;line-height:11px;color:#444;">Число слов: 0</div>
<svg class="a" style="left:203px;top:591px;" width="15" height="13" viewBox="0 0 15 13"><path d="M7 1.5L5.5 0.5H0.5V10.5H5.5L7 11.5L8.5 10.5H13.5V6" fill="none" stroke="#555"/><path d="M7 1.5V12.5" stroke="#555"/><path d="M7 1.5L8.5 0.5H10" fill="none" stroke="#555"/><path d="M8.5 5L10.2 7.2L13.8 1.5" fill="none" stroke="#555" stroke-width="1.1"/></svg>
<div class="a t" style="left:235px;top:591.18px;font-size:11.6px;line-height:11.6px;color:#444;">русский</div>
<svg class="a" style="left:601px;top:590px;" width="14" height="14" viewBox="0 0 14 14"><path d="M0.5 1.5H6L7 2.5L8 1.5H13.5V12.5H8L7 13.5L6 12.5H0.5Z" fill="none" stroke="#555"/><path d="M7 2.5V13" stroke="#555"/><path d="M2 4H5.5M2 6.5H5.5M2 9H5.5M8.5 4H12M8.5 6.5H12M8.5 9H12" stroke="#555"/></svg>
<div class="a" style="left:627px;top:588px;width:38px;height:20px;background:#c6c6c6;"></div>
<svg class="a" style="left:639px;top:591px;" width="14" height="13" viewBox="0 0 14 13"><rect x="0.5" y="0.5" width="13" height="12" fill="none" stroke="#555"/><path d="M3 3.5H11M3 5.5H11M3 7.5H11M3 9.5H11" stroke="#555"/></svg>
<svg class="a" style="left:677px;top:591px;" width="15" height="14" viewBox="0 0 15 14"><path d="M4.5 10.5H0.5V0.5H11.5V3.5" fill="none" stroke="#555"/><path d="M2 2.5H9.5M2 4.5H8M2 6.5H6.5M2 8.5H5.5" stroke="#555"/><circle cx="10" cy="9" r="3.9" fill="#666"/><path d="M7.6 7.8L9.5 11M11 7.5L12.6 6.5L12.8 8.8Z" stroke="#eee" stroke-width="0.9" fill="#eee"/></svg>
<div class="a" style="left:708px;top:597px;width:6px;height:2px;background:#555;"></div>
<div class="a" style="left:718px;top:597px;width:100px;height:1px;background:#a0a0a0;"></div>
<div class="a" style="left:766px;top:592px;width:5px;height:11px;background:#555;"></div>
<div class="a" style="left:822px;top:597px;width:8px;height:2px;background:#555;"></div>
<div class="a" style="left:825px;top:594px;width:2px;height:8px;background:#555;"></div>
<div class="a t" style="left:846.5px;top:592.70px;font-size:10.4px;line-height:10.4px;color:#444;">100%</div>
<svg class="a" style="left:42px;top:583px;" width="23" height="8" viewBox="0 0 23 8"><path d="M1 0.5V4A2.5 2.5 0 0 0 3.5 6.5H19.5A2.5 2.5 0 0 0 22 4V0.5" fill="rgba(255,255,255,0.5)" stroke="#cfcfcf"/></svg>
<div class="a" style="left:0px;top:0px;width:1px;height:610px;background:#2b579a;"></div>
<div class="a" style="left:892px;top:0px;width:1px;height:610px;background:#2b579a;"></div>
<div class="a" style="left:0px;top:609px;width:893px;height:1px;background:#2b579a;"></div>
</body></html>
